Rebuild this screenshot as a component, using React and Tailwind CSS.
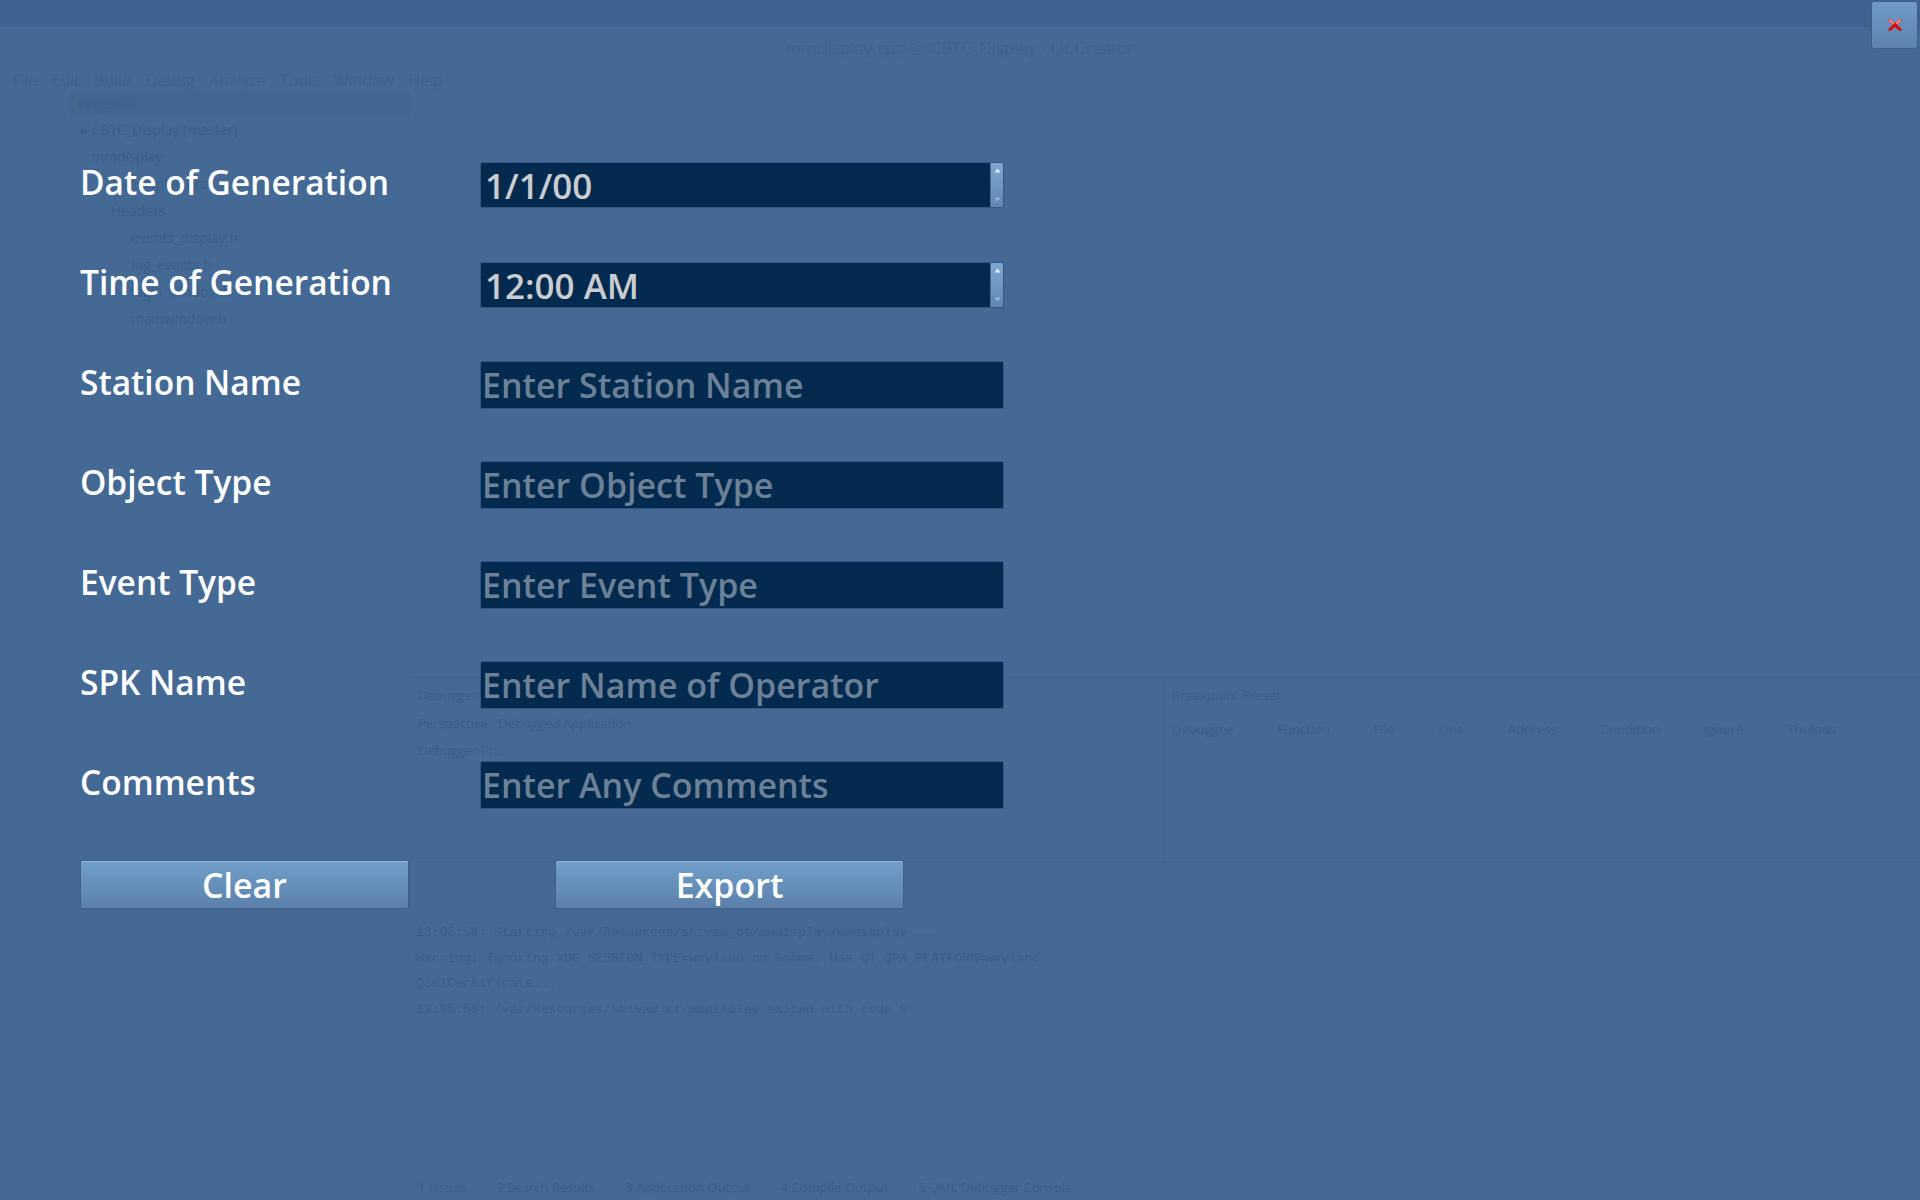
import React from "react";

const ghostText = "text-[#3b5e87]";

function Ghost() {
  return (
    <div className="absolute inset-0 flex flex-col" style={{ fontFamily: '"Open Sans", sans-serif' }}>
      <div className="h-[27px] shrink-0 bg-[#3f6390]" />
      <div className="h-[42px] shrink-0 flex items-center justify-center text-[17px] text-[#3e628c]">
        mmdisplay.cpp @ CBTC_Display - Qt Creator
      </div>
      <div className="h-[22px] shrink-0 flex items-center gap-[14px] pl-[12px] text-[16px] text-[#3e628c]">
        <span>File</span><span>Edit</span><span>Build</span><span>Debug</span><span>Analyze</span><span>Tools</span><span>Window</span><span>Help</span>
      </div>
      <div className="flex-1 flex min-w-0">
        <div className="w-[71px] shrink-0 border-r border-[#3f6490]" />
        <div className="w-[339px] shrink-0 flex flex-col border-r border-[#3f6490]">
          <div className="h-[24px] flex items-center px-[6px] text-[15px] text-[#3e628c] bg-[#41668f]">Projects</div>
          <div className={`flex flex-col gap-[6px] pl-[10px] pt-[4px] text-[14px] ${ghostText}`}>
            <span>▸ CBTC_Display [master]</span>
            <span className="pl-[10px]">mmdisplay</span>
            <span className="pl-[30px]">mmdisplay.pro</span>
            <span className="pl-[30px]">Headers</span>
            <span className="pl-[50px]">events_display.h</span>
            <span className="pl-[50px]">log_events.h</span>
            <span className="pl-[50px]">login_window.h</span>
            <span className="pl-[50px]">mainwindow.h</span>
          </div>
        </div>
        <div className="flex-1 min-w-0 flex flex-col">
          <div className="h-[586px] shrink-0" />
          <div className="h-[186px] shrink-0 flex border-y border-[#3f6490]">
            <div className={`w-[753px] shrink-0 flex flex-col gap-[8px] px-[8px] pt-[8px] text-[13px] ${ghostText}`}>
              <span>Debugger Preset</span>
              <span>Perspective &nbsp; Debugged Application</span>
              <span>Debugger Pr...</span>
            </div>
            <div className={`flex-1 min-w-0 flex flex-col gap-[14px] px-[8px] pt-[8px] text-[13px] border-l border-[#3f6490] ${ghostText}`}>
              <span>Breakpoint Preset</span>
              <div className="flex gap-[44px]"><span>Debuggee</span><span>Function</span><span>File</span><span>Line</span><span>Address</span><span>Condition</span><span>Ignore</span><span>Threads</span></div>
            </div>
          </div>
          <div className={`flex-1 flex flex-col gap-[6px] pl-[6px] pt-[20px] text-[13px] ${ghostText}`} style={{ fontFamily: '"Liberation Mono", monospace' }}>
            <span className="pt-[40px]">13:05:58: Starting /var/Resources/shivam_ct/mmdisplay/mmdisplay ...</span>
            <span>Warning: Ignoring XDG_SESSION_TYPE=wayland on Gnome. Use QT_QPA_PLATFORM=wayland</span>
            <span>QSslCertificate...</span>
            <span>13:05:58: /var/Resources/shivam_ct/mmdisplay exited with code 0</span>
          </div>
          <div className={`h-[25px] shrink-0 flex items-center gap-[30px] pl-[8px] text-[13px] ${ghostText}`}>
            <span>1 Issues</span><span>2 Search Results</span><span>3 Application Output</span><span>4 Compile Output</span><span>5 QML Debugger Console</span>
          </div>
        </div>
      </div>
    </div>
  );
}

function SpinInput({ value }) {
  return (
    <div className="w-[524px] h-[46px] flex bg-[#012a4e] border border-[#355781] rounded-[2px] overflow-hidden">
      <div className="flex-1 flex items-center pl-[4px] text-[35px] font-semibold text-[#c9ccd0] leading-none">{value}</div>
      <div className="w-[13px] flex flex-col items-center justify-between py-[5px] bg-gradient-to-b from-[#7ea8d1] to-[#5f87b1] border-l border-[#4a6e96]">
        <svg width="7" height="5" viewBox="0 0 7 5"><path d="M3.5 0.5 L6.5 4.5 L0.5 4.5 Z" fill="#e6eef7" /></svg>
        <svg width="7" height="5" viewBox="0 0 7 5"><path d="M0.5 0.5 L6.5 0.5 L3.5 4.5 Z" fill="#9db8d4" /></svg>
      </div>
    </div>
  );
}

function TextInput({ placeholder }) {
  return (
    <div className="w-[524px] h-[48px] flex items-center bg-[#012a4e] border border-[#355781] rounded-[2px] pl-[1px] text-[34px] font-semibold text-[#6c8197] leading-none">
      {placeholder}
    </div>
  );
}

function Row({ label, children }) {
  return (
    <div className="h-[100px] flex items-center">
      <div className="w-[400px] text-[33.5px] font-semibold text-white leading-none pb-[4px]">{label}</div>
      {children}
    </div>
  );
}

function Btn({ children, w }) {
  return (
    <button className={`${w} h-[49px] flex items-center justify-center rounded-[2px] border border-[#3e5e83] bg-gradient-to-b from-[#71a0ca] to-[#5b80aa] shadow-[inset_0_1px_0_rgba(255,255,255,0.25)] text-[34px] font-semibold text-white leading-none`}>
      {children}
    </button>
  );
}

export default function App() {
  return (
    <div className="relative w-[1920px] h-[1200px] overflow-hidden bg-[#436994]" style={{ fontFamily: '"Open Sans", "Noto Sans", sans-serif' }}>
      <Ghost />
      <div className="relative flex flex-col pl-[80px] pt-[135px]">
        <Row label="Date of Generation"><SpinInput value="1/1/00" /></Row>
        <Row label="Time of Generation"><SpinInput value="12:00 AM" /></Row>
        <Row label="Station Name"><TextInput placeholder="Enter Station Name" /></Row>
        <Row label="Object Type"><TextInput placeholder="Enter Object Type" /></Row>
        <Row label="Event Type"><TextInput placeholder="Enter Event Type" /></Row>
        <Row label="SPK Name"><TextInput placeholder="Enter Name of Operator" /></Row>
        <Row label="Comments"><TextInput placeholder="Enter Any Comments" /></Row>
        <div className="flex gap-[146px] mt-[25px]">
          <Btn w="w-[329px]">Clear</Btn>
          <Btn w="w-[349px]">Export</Btn>
        </div>
      </div>
      <button className="absolute top-[1px] right-[2px] w-[47px] h-[48px] flex items-center justify-center rounded-[3px] border border-[#3f5f85] bg-gradient-to-b from-[#6f9bc6] to-[#5c84ae]">
        <svg width="14" height="12" viewBox="0 0 14 12">
          <path d="M2 1.5 L12 10.5" stroke="#e00000" strokeWidth="3" strokeLinecap="round" />
          <path d="M12 1.5 L2 10.5" stroke="#e00000" strokeWidth="3" strokeLinecap="round" />
          <path d="M2 1.5 L5 4.2" stroke="#f28a8a" strokeWidth="2.4" strokeLinecap="round" />
          <path d="M12 1.5 L9 4.2" stroke="#f28a8a" strokeWidth="2.4" strokeLinecap="round" />
        </svg>
      </button>
    </div>
  );
}
